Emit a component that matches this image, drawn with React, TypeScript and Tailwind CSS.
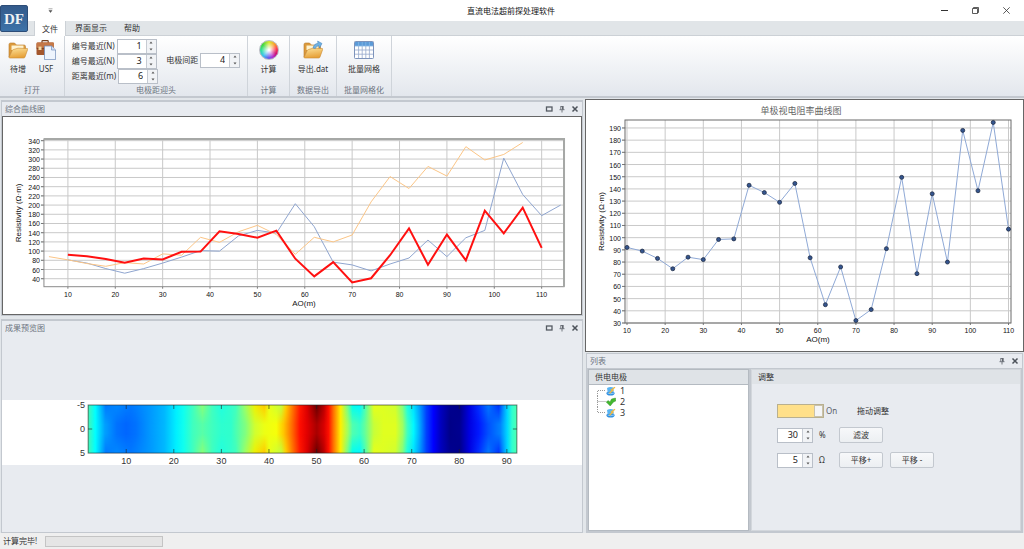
import React, { useId, useState } from 'react';

const AO = Array.from({ length: 28 }, (_, i) => 6 + i * 4);

const measured = [
  92, 89, 83, 74.5, 84, 82, 98.5, 99, 143, 137, 129, 144.5, 83.5, 45, 76, 32, 41, 91, 149.5, 70.5, 136, 80, 188,
  138.5, 194.5, 107,
];
const electrodeA = [
  88, 81, 73, 67, 75, 72, 94, 91, 130, 119, 142, 156, 136, 93, 130, 120, 135, 207, 262, 236, 284, 263, 327, 298, 310,
  336,
];
const electrodeB = [
  81, 74, 62, 52, 62, 74, 87, 101, 100, 133, 145, 139, 203, 153, 76, 70, 57, 72, 85, 124, 88, 129, 145, 302, 223, 177,
  200,
];

type Stop = [number, string];

// colour map along the tunnel axis, position in metres
const centreStops: Stop[] = [
  [2, '#48f5b4'], [3.5, '#00ffff'], [5.5, '#00a0ff'], [8, '#0072ff'], [10, '#0066ff'], [12, '#0072ff'],
  [15, '#0098ff'], [18, '#00b8ff'], [20.5, '#00f0ff'], [22, '#10ffef'], [24, '#40ffbf'], [26, '#58ffa8'],
  [28, '#40ffbf'], [30, '#2dffd0'], [32, '#30ffcc'], [35, '#80ff80'], [37, '#d0ff30'], [39, '#ecff14'],
  [41.5, '#f6ff0a'], [43, '#ffc800'], [45, '#ff6000'], [46.5, '#ff0c00'], [48, '#e00000'], [50, '#a80000'],
  [51.5, '#d80000'], [52.5, '#ff1000'], [53.5, '#ff7000'], [55, '#fff000'], [56.5, '#a0ff60'], [57.5, '#50ffb0'],
  [59, '#38ffc8'], [60, '#60ffa0'], [62, '#c8ff38'], [64, '#e0ff20'], [66.5, '#e0ff20'], [68, '#a0ff60'],
  [69, '#40ffc0'], [70.3, '#00f8ff'], [71.5, '#00b0ff'], [73, '#0040ff'], [74.5, '#0000ff'], [76, '#0000c0'],
  [78, '#000088'], [80, '#000090'], [82, '#0000e0'], [84, '#0018ff'], [86, '#0050ff'], [88.5, '#0080ff'],
  [90, '#00d8ff'], [91, '#30ffd0'], [92, '#50ffb0'],
];
const wallStops: Stop[] = [
  [2, '#48f5b4'], [3.5, '#00ffff'], [5.7, '#0078ff'], [8, '#0088ff'], [11, '#0078ff'], [15, '#0098ff'],
  [18, '#00b8ff'], [20.5, '#00f0ff'], [22, '#10ffef'], [24, '#40ffbf'], [26, '#88ff78'], [28, '#40ffbf'],
  [30, '#20ffdf'], [33, '#40ffc0'], [35, '#a0ff60'], [37, '#f0f000'], [39, '#ffc800'], [40, '#e8ff18'],
  [42.5, '#c0ff40'], [43.5, '#ffd000'], [45, '#ff7000'], [46.5, '#ff1800'], [48, '#d80000'], [50, '#680000'],
  [51.5, '#b80000'], [52.5, '#ff1000'], [53.5, '#ff7000'], [55, '#fff000'], [56.5, '#70ff90'], [57.5, '#00ffef'],
  [59, '#00f8ff'], [60, '#40ffc0'], [62, '#e8ff18'], [66.5, '#d0ff30'], [68, '#80ff80'], [69, '#20ffe0'],
  [70.3, '#00e0ff'], [71.5, '#00a0ff'], [73, '#0040ff'], [74.5, '#0000ff'], [76, '#0000c0'], [78, '#000090'],
  [80, '#000088'], [82, '#0000e0'], [84, '#0030ff'], [86, '#0078ff'], [88.2, '#0030ff'], [89, '#0080ff'],
  [90, '#00d8ff'], [91, '#30ffd0'], [92, '#50ffb0'],
];

const range = (from: number, to: number, step: number) =>
  Array.from({ length: Math.round((to - from) / step) + 1 }, (_, i) => from + i * step);

interface Series {
  start: number;
  values: number[];
  color: string;
  width: number;
  dots?: boolean;
}

interface ChartProps {
  width: number;
  height: number;
  plot: [number, number, number, number];
  x: (v: number) => number;
  y: (v: number) => number;
  yTicks: number[];
  series: Series[];
  title?: string;
  frame: string;
  shaded?: boolean;
  label: string;
}

const LineChart = ({ width, height, plot, x, y, yTicks, series, title, frame, shaded, label }: ChartProps) => {
  const [left, top, right, bottom] = plot;
  const middle = (left + right) / 2;
  const xTicks = range(10, 110, 10);
  return (
    <svg
      viewBox={`0 0 ${width} ${height}`}
      className="block w-full bg-white font-['Liberation_Sans',Arial,sans-serif]"
      role="img"
      aria-label={label}
    >
      {title && (
        <text x={middle - 17} y={14} fontSize={9} textAnchor="middle" fill="#666" className="font-['Noto_Sans_CJK_SC',sans-serif]">
          {title}
        </text>
      )}
      {yTicks.map((v) => (
        <g key={v}>
          <line x1={left - 3} x2={right} y1={y(v)} y2={y(v)} stroke="#c9c9c9" />
          <line x1={left - 3} x2={left} y1={y(v)} y2={y(v)} stroke="#777" />
          <text x={left - 4} y={y(v) + 3} fontSize={7} textAnchor="end" fill="#111">{v}</text>
        </g>
      ))}
      {xTicks.map((v) => (
        <g key={v}>
          <line x1={x(v)} x2={x(v)} y1={top} y2={bottom} stroke="#c9c9c9" />
          <line x1={x(v)} x2={x(v)} y1={bottom} y2={bottom + 2} stroke="#777" />
          <text x={x(v)} y={bottom + 10} fontSize={7} textAnchor="middle" fill="#111">{v}</text>
        </g>
      ))}
      <rect x={left} y={top} width={right - left} height={bottom - top} fill="none" stroke={frame} />
      {shaded && <path d={`M${left} ${top}H${right}V${bottom}`} fill="none" stroke="#a6a8a6" strokeWidth={2} />}
      {series.map((s) => (
        <g key={s.color}>
          <polyline
            points={s.values.map((v, i) => `${x(s.start + i * 4)},${y(v)}`).join(' ')}
            fill="none"
            stroke={s.color}
            strokeWidth={s.width}
          />
          {s.dots &&
            s.values.map((v, i) => (
              <circle key={AO[i]} cx={x(s.start + i * 4)} cy={y(v)} r={2} fill="#34558f" stroke="#1f2c45" strokeWidth={0.8} />
            ))}
        </g>
      ))}
      <text x={middle} y={bottom + 19} fontSize={8} textAnchor="middle" fill="#111">AO(m)</text>
      <text
        transform={`translate(18 ${(top + bottom) / 2}) rotate(-90)`}
        fontSize={8}
        textAnchor="middle"
        fill="#111"
      >
        Resistivity (Ω·m)
      </text>
    </svg>
  );
};

const HeatMap = () => {
  const x = (v: number) => 86 + (v - 2) * 4.75;
  const stops = (list: Stop[]) =>
    list.map(([v, color]) => <stop key={v} offset={(v - 2) / 90} stopColor={color} />);
  return (
    <svg viewBox="0 0 579 65" className="block w-full bg-white font-['Liberation_Sans',Arial,sans-serif]" role="img" aria-label="成果预览图">
      <defs>
        <linearGradient id="centre">{stops(centreStops)}</linearGradient>
        <linearGradient id="wall">{stops(wallStops)}</linearGradient>
        <linearGradient id="fade" x1="0" y1="0" x2="0" y2="1">
          <stop offset="0" stopColor="#fff" />
          <stop offset="0.4" stopColor="#000" />
          <stop offset="0.6" stopColor="#000" />
          <stop offset="1" stopColor="#fff" />
        </linearGradient>
        <mask id="walls">
          <rect x={86} y={5} width={428} height={48} fill="url(#fade)" />
        </mask>
      </defs>
      <rect x={86} y={5} width={428} height={48} fill="url(#centre)" />
      <rect x={86} y={5} width={428} height={48} fill="url(#wall)" mask="url(#walls)" />
      <rect x={86} y={5} width={428} height={48} fill="none" stroke="#222" strokeOpacity={0.6} />
      {range(10, 90, 10).map((v) => (
        <g key={v}>
          <path d={`M${x(v)} 5v4M${x(v)} 53v-4`} stroke="#222" strokeOpacity={0.6} />
          <text x={x(v)} y={64} fontSize={9} textAnchor="middle" fill="#333">{v}</text>
        </g>
      ))}
      <path d="M86 29h4M514 29h-4" stroke="#222" strokeOpacity={0.6} />
      {[-5, 0, 5].map((v) => (
        <text key={v} x={83} y={32 + v * 4.8} fontSize={9} textAnchor="end" fill="#333">{v}</text>
      ))}
    </svg>
  );
};

/* Icons */

const FolderIcon = ({ arrow = false }: { arrow?: boolean }) => (
  <svg viewBox="0 0 20 20" className="size-5">
    <defs>
      <linearGradient id="folder" x1="0" y1="0" x2="0.3" y2="1">
        <stop offset="0" stopColor="#fde29a" />
        <stop offset="1" stopColor="#e7a23a" />
      </linearGradient>
    </defs>
    <path d="M1 17V4.500Q1 3 2.500 3H6.500L8.500 5H16Q17.500 5 17.500 6.500V9H5L1 17" fill="#dc9b3d" stroke="#b9792a" strokeWidth=".6" />
    <path d="M3.500 5.500H15.500V10H3.500Z" fill="#fff3cf" />
    <path d="M1 17.500L4.200 10.500Q4.500 9.800 5.300 9.600L10 8.200L19.300 8.500Q20 8.600 19.700 9.400L17 17Q16.700 18 15.700 18H2Q1 18 1 17.500Z" fill="url(#folder)" stroke="#c98a33" strokeWidth=".6" />
    {arrow && (
      <path d="M10 8Q11 3.600 15 3.300L14.600 1L19 3.500L16.500 8L15.800 5.800Q13 6 12.300 8.600Z" fill="#6fb1e3" stroke="#3f7fb8" strokeWidth=".5" />
    )}
  </svg>
);

const SuitcaseIcon = () => (
  <svg viewBox="0 0 20 20" className="size-5">
    <path d="M6 3V1.300Q6 .6 6.700 .6H11.500Q12.200 .6 12.200 1.300V3" fill="none" stroke="#77401f" strokeWidth="1.200" />
    <rect x=".5" y="2.600" width="17.500" height="12.400" rx="1.200" fill="#a4572d" />
    <path d="M.5 4Q.5 2.600 2 2.600H17Q18 2.600 18 4V8H.5Z" fill="#c57847" />
    <path d="M.5 8.300H18" stroke="#6c3618" strokeWidth=".7" />
    <rect x="2.500" y="6.600" width="3" height="3.400" fill="#f2d9a5" />
    <path d="M8.500 6H15.500L19.600 10V19.600H8.500Z" fill="#eef4fd" stroke="#7590bd" strokeWidth=".8" />
    <path d="M15.500 6V10H19.600" fill="#cddcf4" stroke="#7590bd" strokeWidth=".7" />
  </svg>
);

const ColorWheel = () => (
  <span
    aria-hidden="true"
    className="block size-5 rounded-full border border-[#b9bcc4] bg-[radial-gradient(circle,#ffffff_5%,transparent_60%),conic-gradient(#d8e830,#f8a030_12%,#ff4050_22%,#d01070_32%,#b030d0_42%,#6060f0_52%,#40c0f0_62%,#30e0a0_74%,#40d840_86%,#d8e830)]"
  />
);

const GridIcon = () => (
  <svg viewBox="0 0 20 20" className="size-5">
    <rect x=".5" y="1.500" width="19" height="17" rx=".8" fill="#fff" stroke="#7d93bb" />
    <rect x="1" y="2" width="18" height="4" fill="#5b9bd8" />
    <path d="M1 10H19M1 14.200H19M4.600 6V18M8.200 6V18M11.800 6V18M15.400 6V18" stroke="#96a8cc" strokeWidth=".8" />
    <path d="M4.600 2V6M8.200 2V6M11.800 2V6M15.400 2V6M1 6H19" stroke="#86b6e4" strokeWidth=".8" />
  </svg>
);

const MaximizeIcon = () => (
  <svg viewBox="0 0 8 8" className="size-2">
    <rect x="1.500" y="2" width="5.500" height="4" fill="none" stroke="#555b63" strokeWidth="1.300" />
  </svg>
);

const PinIcon = () => (
  <svg viewBox="0 0 8 8" className="size-2">
    <path d="M2.500 1.500H5.500M2.800 1.500V4.500M5.200 1.500V4.500M1.500 4.700H6.500M4 5V7.500" fill="none" stroke="#555b63" strokeWidth=".8" />
    <path d="M4.600 1.500V4.500" stroke="#555b63" />
  </svg>
);

const CloseIcon = () => (
  <svg viewBox="0 0 8 8" className="size-2">
    <path d="M1.500 1.500L6.500 6.500M6.500 1.500L1.500 6.500" stroke="#4d535b" strokeWidth="1.500" />
  </svg>
);

const ElectrodeIcon = () => (
  <svg viewBox="0 0 10 10" className="size-2.5">
    <ellipse cx="4.500" cy="7.300" rx="4" ry="2.300" fill="#2f8fe0" />
    <path d="M1 2Q4 .2 7.500 1.500V5.500Q4 7 1.500 5Z" fill="#58b4f2" />
    <path d="M1.500 7Q4.500 8.500 8 7" stroke="#a9dbff" fill="none" strokeWidth=".8" />
    <path d="M9 1.200L5.500 3.800L6.800 4.300L3.500 7.300" fill="none" stroke="#f5b93c" strokeWidth="1.300" />
  </svg>
);

const CheckIcon = () => (
  <svg viewBox="0 0 10 10" className="size-2.5">
    <path d="M.2 5L2.200 3.600L4 5L5.500 2L9.500 1L9.800 4L7.500 5L4.200 9Z" fill="#43b82f" stroke="#2a8420" strokeWidth=".4" />
  </svg>
);

/* Controls */

const NumberBox = ({ initial, label, wide = false }: { initial: number; label: React.ReactNode; wide?: boolean }) => {
  const [value, setValue] = useState(initial);
  const id = useId();
  const box = (
    <span className={`flex h-[15px] border border-[#b9bfc8] bg-white ${wide ? 'w-10' : 'w-9'}`}>
      <input
        id={id}
        value={value}
        onChange={(e) => setValue(Number(e.target.value) || 0)}
        className="w-0 min-w-0 flex-1 pr-1 text-right text-[9px] leading-3 text-[#222] outline-none"
      />
      <span className="flex w-2.5 flex-col border-l border-[#c6cbd3] bg-[#f1f3f6]">
        <button type="button" aria-label="增加" onClick={() => setValue(value + 1)} className="flex flex-1 items-center justify-center">
          <svg viewBox="0 0 4 3" className="h-[3px] w-1"><path d="M2 .5L3.500 2.500H.5Z" fill="#555" /></svg>
        </button>
        <button type="button" aria-label="减少" onClick={() => setValue(value - 1)} className="flex flex-1 items-center justify-center">
          <svg viewBox="0 0 4 3" className="h-[3px] w-1"><path d="M2 2.500L3.500 .5H.5Z" fill="#555" /></svg>
        </button>
      </span>
    </span>
  );
  return wide ? (
    <div className="flex items-center gap-0.5">
      <label htmlFor={id}>{label}</label>
      {box}
    </div>
  ) : (
    <div className="flex items-center gap-1.5">
      {box}
      <label htmlFor={id}>{label}</label>
    </div>
  );
};

const RibbonGroup = ({ title, className, children }: { title: string; className: string; children: React.ReactNode }) => (
  <section className={`flex flex-col border-r border-[#cfd4da] ${className}`}>
    <div className="flex flex-1 justify-center">{children}</div>
    <h2 className="text-center leading-3 text-[#6d7480]">{title}</h2>
  </section>
);

const RibbonButton = ({ icon, text }: { icon: React.ReactNode; text: string }) => (
  <button type="button" className="flex flex-col items-center gap-[3px] self-start pt-1">
    {icon}
    <span className="leading-3 whitespace-nowrap">{text}</span>
  </button>
);

const PanelHeader = ({ title, canMaximize = true }: { title: string; canMaximize?: boolean }) => (
  <header className="flex h-3.5 items-center justify-between pr-[3px] pl-[3px] text-[#6d7480]">
    <h2>{title}</h2>
    <div className="flex gap-[5px]">
      {canMaximize && <button type="button" aria-label="最大化"><MaximizeIcon /></button>}
      <button type="button" aria-label="固定"><PinIcon /></button>
      <button type="button" aria-label="关闭"><CloseIcon /></button>
    </div>
  </header>
);

const PushButton = ({ children }: { children: React.ReactNode }) => (
  <button type="button" className="h-4 w-11 rounded-xs border border-[#c3c8cf] bg-gradient-to-b from-[#f7f8fa] to-[#eceff2]">
    {children}
  </button>
);

const App = () => {
  const [dragging, setDragging] = useState(true);
  const [selected, setSelected] = useState(2);

  return (
    <div className="flex min-h-screen flex-col bg-[#e2e6ea] font-['Noto_Sans','Noto_Sans_CJK_SC',sans-serif] text-[8px] leading-3 text-[#333]">
      {/* Title bar */}
      <header className="relative flex h-[21px] items-center bg-white">
        <button type="button" aria-label="DF" className="absolute top-[5px] left-0 z-10 h-[27px] w-7 rounded-xs border border-[#2d4d78] bg-gradient-to-b from-[#335a8b] to-[#3d72a8] font-['Liberation_Serif',serif] text-[15px] leading-6 font-bold text-[#eef1f5]">
          DF
        </button>
        <button type="button" aria-label="自定义" className="ml-12">
          <svg viewBox="0 0 5 5" className="size-[5px]"><path d="M.5 .8H4.500M1 2.500H4L2.500 4.500Z" fill="#555" stroke="#555" strokeWidth=".5" /></svg>
        </button>
        <h1 className="flex-1 text-center text-[#111]">
          <span className="pl-10">直流电法超前探处理软件</span>
        </h1>
        <div className="flex pr-0.5">
          <button type="button" aria-label="最小化" className="flex h-5 w-[31px] items-center justify-center">
            <svg viewBox="0 0 7 7" className="size-[7px]"><path d="M0 3.500H7" stroke="#333" /></svg>
          </button>
          <button type="button" aria-label="还原" className="flex h-5 w-[31px] items-center justify-center">
            <svg viewBox="0 0 7 7" className="size-[7px]"><path d="M.5 1.500H5.500V6.500H.5ZM1.500 1.500V.5H6.500V5.500H5.500" fill="none" stroke="#333" strokeWidth=".8" /></svg>
          </button>
          <button type="button" aria-label="关闭窗口" className="flex h-5 w-[31px] items-center justify-center">
            <svg viewBox="0 0 7 7" className="size-[7px]"><path d="M.3 .3L6.700 6.700M6.700 .3L.3 6.700" stroke="#333" strokeWidth=".8" /></svg>
          </button>
        </div>
      </header>

      <nav className="flex h-[15px] items-stretch border-b border-[#ccd1d6] bg-[#e1e5e8] pl-[34px]">
        <button type="button" className="-mb-px w-8 border-x border-[#ccd1d6] bg-white">文件</button>
        <button type="button" className="w-[50px]">界面显示</button>
        <button type="button" className="w-8">帮助</button>
      </nav>

      {/* Ribbon */}
      <div className="flex h-[62px] border-b-2 border-[#c3c8cf] bg-gradient-to-b from-white to-[#e3e7ed]">
        <RibbonGroup title="打开" className="w-[65px]">
          <div className="flex gap-2">
            <RibbonButton icon={<FolderIcon />} text="待增" />
            <RibbonButton icon={<SuitcaseIcon />} text="USF" />
          </div>
        </RibbonGroup>
        <RibbonGroup title="电极距迎头" className="w-[183px]">
          <div className="flex items-center gap-2">
            <div className="flex flex-col pt-0.5">
              <NumberBox wide label="编号最近(N)" initial={1} />
              <NumberBox wide label="编号最远(N)" initial={3} />
              <NumberBox wide label="距离最近(m)" initial={6} />
            </div>
            <NumberBox wide label="电极间距" initial={4} />
          </div>
        </RibbonGroup>
        <RibbonGroup title="计算" className="w-[42px]">
          <RibbonButton icon={<ColorWheel />} text="计算" />
        </RibbonGroup>
        <RibbonGroup title="数据导出" className="w-[47px]">
          <RibbonButton icon={<FolderIcon arrow />} text="导出.dat" />
        </RibbonGroup>
        <RibbonGroup title="批量网格化" className="w-[55px]">
          <RibbonButton icon={<GridIcon />} text="批量网格" />
        </RibbonGroup>
      </div>

      {/* Workspace */}
      <main className="grid flex-1 grid-cols-[582fr_439fr] gap-0.5 pt-px pl-px">
        <div className="flex min-w-0 flex-col gap-[3px] pt-px">
          <section className="border border-t-2 border-[#c3c8cf] bg-[#e8ebf0]">
            <PanelHeader title="综合曲线图" />
            <div className="border border-[#666]">
              <LineChart
                label="综合曲线图"
                width={579}
                height={197}
                plot={[41, 22, 562, 170]}
                x={(v) => 65 + (v - 10) * 4.746}
                y={(v) => 162 - (v - 40) * 0.461}
                yTicks={range(40, 340, 20)}
                frame="#8a8a8a"
                shaded
                series={[
                  { start: 10, values: electrodeB, color: '#8fa5cf', width: 1 },
                  { start: 6, values: electrodeA, color: '#fbc586', width: 1 },
                  { start: 10, values: measured, color: '#ff1010', width: 2 },
                ]}
              />
            </div>
          </section>
          <section className="flex flex-1 flex-col border border-t-2 border-[#c3c8cf] bg-[#e8ebf0]">
            <PanelHeader title="成果预览图" />
            <div className="flex flex-1 flex-col justify-center pb-0.5">
              <HeatMap />
            </div>
          </section>
        </div>

        <div className="flex min-w-0 flex-col gap-px">
          <section className="border border-[#666]">
            <LineChart
              label="单极视电阻率曲线图"
              title="单极视电阻率曲线图"
              width={437}
              height={251}
              plot={[39, 20, 425, 223]}
              x={(v) => 41 + (v - 10) * 3.815}
              y={(v) => 223 - (v - 30) * 1.219}
              yTicks={range(30, 190, 10)}
              frame="#6b6b6b"
              series={[{ start: 10, values: measured, color: '#8fa9d6', width: 1, dots: true }]}
            />
          </section>

          <section className="mx-px flex flex-1 flex-col border border-[#c3c8cf] bg-[#e8ebf0]">
            <PanelHeader title="列表" canMaximize={false} />
            <div className="flex flex-1 gap-0.5 bg-[#c3c8cf] p-px">
              <section className="flex w-[161px] flex-col border border-[#b4bac1] bg-[#dfe3e7]">
                <h3 className="h-3.5 pl-1.5 leading-3.5">供电电极</h3>
                <ul className="flex-1 border-t border-[#b4bac1] bg-white pl-2">
                  {[1, 2, 3].map((n) => (
                    <li key={n} className="flex h-[11px] items-center">
                      <svg viewBox="0 0 9 11" className="h-[11px] w-[9px]">
                        <path
                          d={n === 1 ? 'M.5 11V5.500H9' : n === 3 ? 'M.5 0V5.500H9' : 'M.5 0V11M.5 5.500H9'}
                          fill="none"
                          stroke="#999"
                          strokeDasharray="1 1"
                        />
                      </svg>
                      <button type="button" onClick={() => setSelected(n)} className="flex items-center gap-1 text-[9px]">
                        {n === selected ? <CheckIcon /> : <ElectrodeIcon />}
                        {n}
                      </button>
                    </li>
                  ))}
                </ul>
              </section>

              <section className="flex flex-1 flex-col border border-[#d3d7dc] bg-[#e8ebf0]">
                <h3 className="h-3.5 bg-[#dfe3e7] pl-1.5 leading-3.5">调整</h3>
                <div className="grid grid-cols-[62px_auto] items-center justify-start gap-y-2 pt-5 pl-[25px]">
                  <div className="flex items-center gap-0.5">
                    <button
                      type="button"
                      role="switch"
                      aria-checked={dragging}
                      aria-labelledby="drag-label"
                      onClick={() => setDragging(!dragging)}
                      className={`flex h-3.5 w-[47px] border border-[#b9b08f] ${dragging ? 'justify-end bg-[#ffe08a]' : 'bg-white'}`}
                    >
                      <span className="h-3 w-[9px] border border-[#c9c2ab] bg-[#f4f5f7]" />
                    </button>
                    <span className="text-[#5b6068]">{dragging ? 'On' : 'Off'}</span>
                  </div>
                  <span id="drag-label" className="pl-[18px]">拖动调整</span>
                  <NumberBox initial={30} label="%" />
                  <div className="flex h-[18px] items-center gap-[7px]">
                    <PushButton>滤波</PushButton>
                  </div>
                  <NumberBox initial={5} label="Ω" />
                  <div className="flex items-center gap-[7px]">
                    <PushButton>平移+</PushButton>
                    <PushButton>平移 -</PushButton>
                  </div>
                </div>
              </section>
            </div>
          </section>
        </div>
      </main>

      {/* Status bar */}
      <footer className="flex h-4 items-center gap-2 bg-[#efefef] pl-[3px]">
        <span id="status">计算完毕!</span>
        <div role="progressbar" aria-labelledby="status" aria-valuenow={0} className="h-[11px] w-[118px] border border-[#c4c4c4] bg-[#e5e5e5]" />
      </footer>
    </div>
  );
};

export default App;
